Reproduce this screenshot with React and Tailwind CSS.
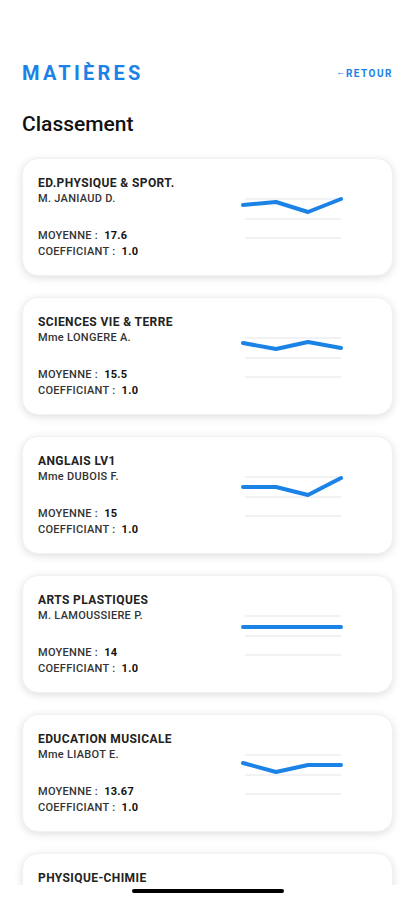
import React from "react";

const subjects = [
  { name: "ED.PHYSIQUE & SPORT.", teacher: "M. JANIAUD D.", avg: "17.6", coef: "1.0", pts: [11, 8, 18, 5] },
  { name: "SCIENCES VIE & TERRE", teacher: "Mme LONGERE A.", avg: "15.5", coef: "1.0", pts: [10, 16, 9, 15] },
  { name: "ANGLAIS LV1", teacher: "Mme DUBOIS F.", avg: "15", coef: "1.0", pts: [15, 15, 23, 6] },
  { name: "ARTS PLASTIQUES", teacher: "M. LAMOUSSIERE P.", avg: "14", coef: "1.0", pts: [16, 16, 16, 16] },
  { name: "EDUCATION MUSICALE", teacher: "Mme LIABOT E.", avg: "13.67", coef: "1.0", pts: [13, 22, 15, 15] },
];

const XS = [2, 35, 67, 100];

function Sparkline({ pts }) {
  const d = pts.map((y, i) => `${i === 0 ? "M" : "L"}${XS[i]} ${y}`).join(" ");
  return (
    <svg width="104" height="50" viewBox="0 0 104 50" className="mt-[35px] mr-[47px] shrink-0">
      {[5, 25, 44].map(y => (
        <line key={y} x1="4" x2="100" y1={y} y2={y} stroke="#e3e5e8" strokeWidth="1.2" />
      ))}
      <path d={d} fill="none" stroke="#1b82e6" strokeWidth="4" strokeLinecap="round" strokeLinejoin="round" />
    </svg>
  );
}

function SubjectCard({ s }) {
  return (
    <div className="flex h-[118px] shrink-0 rounded-[16px] bg-white shadow-[0_2px_8px_rgba(0,0,0,0.13)] border border-[#f1f1f1]">
      <div className="flex-1 pl-[15px] pt-[17px] text-[#222] tracking-[0.3px]">
        <div className="text-[12px] leading-[14px] font-bold tracking-[0.4px]">{s.name}</div>
        <div className="mt-[2px] text-[11px] leading-[14px] font-medium text-[#333]">{s.teacher}</div>
        <div className="mt-[23px] text-[11px] leading-[14px] font-medium text-[#333]">
          MOYENNE :&nbsp; <span className="font-bold text-[#111]">{s.avg}</span>
        </div>
        <div className="mt-[2px] text-[11px] leading-[14px] font-medium text-[#333]">
          COEFFICIANT :&nbsp; <span className="font-bold text-[#111]">{s.coef}</span>
        </div>
      </div>
      <Sparkline pts={s.pts} />
    </div>
  );
}

export default function App() {
  return (
    <div className="relative h-[900px] w-[415px] overflow-hidden bg-white" style={{ fontFamily: "Roboto, 'Liberation Sans', sans-serif" }}>
      <div className="px-[22px] pt-[61px]">
        <div className="flex items-center justify-between">
          <h1 className="text-[20px] leading-[24px] font-bold tracking-[3.2px] text-[#1b82e6]">MATIÈRES</h1>
          <button className="flex items-center gap-[1px] text-[10px] font-bold tracking-[1.5px] text-[#1b82e6]">
            <span className="text-[9px] tracking-normal">←</span>RETOUR
          </button>
        </div>
        <h2 className="mt-[27px] text-[21px] leading-[24px] font-medium text-[#111]">Classement</h2>
        <div className="mt-[22px] flex flex-col gap-[21px]">
          {subjects.map(s => <SubjectCard key={s.name} s={s} />)}
          <div className="h-[118px] shrink-0 rounded-[16px] bg-white shadow-[0_2px_8px_rgba(0,0,0,0.13)] border border-[#f1f1f1] pl-[15px] pt-[17px]">
            <div className="text-[12px] leading-[14px] font-bold tracking-[0.4px] text-[#222]">PHYSIQUE-CHIMIE</div>
          </div>
        </div>
      </div>
      <div className="absolute bottom-0 left-0 right-0 h-[15px] bg-white">
        <div className="mx-auto mt-[4px] h-[4px] w-[152px] rounded-full bg-black" />
      </div>
    </div>
  );
}
